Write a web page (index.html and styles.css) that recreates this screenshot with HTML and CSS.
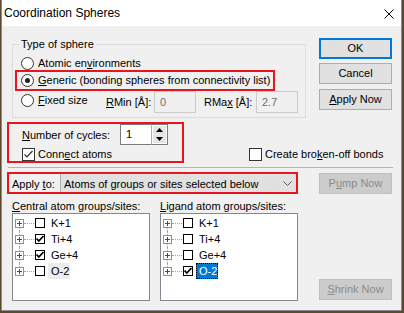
FILE: index.html
```html
<!DOCTYPE html>
<html>
<head>
<meta charset="utf-8">
<title>Coordination Spheres</title>
<link rel="stylesheet" href="styles.css">
</head>
<body>
<div class="window">
	<div class="titlebar">
		<span class="title">Coordination Spheres</span>
		<svg class="close_icon" width="10" height="10" viewBox="0 0 10 10"><path d="M0.5 0.5L9.5 9.5M9.5 0.5L0.5 9.5" stroke="#000" stroke-width="1"/></svg>
	</div>
	<div class="client">
		<div class="top_row">
			<fieldset class="sphere_box">
				<legend>Type of sphere</legend>
				<div class="opt"><span class="radio"></span>Atomic en<u>v</u>ironments</div>
				<div class="opt mark mark_generic"><span class="radio on"></span><u>G</u>eneric (bonding spheres from connectivity list)</div>
				<div class="fixed_row">
					<div class="opt fixed_opt"><span class="radio"></span><u>F</u>ixed size</div>
					<span class="r_label rmin"><u>R</u>Min [Å]:</span>
					<span class="num_box">0</span>
					<span class="r_label rmax">RMa<u>x</u> [Å]:</span>
					<span class="num_box">2.7</span>
				</div>
			</fieldset>
			<div class="btn_col">
				<button class="btn btn_default">OK</button>
				<button class="btn btn_cancel">Cancel</button>
				<button class="btn btn_apply"><u>A</u>pply Now</button>
			</div>
		</div>

		<div class="cycles_row">
			<div class="mark mark_cycles">
				<div class="cycles_line">
					<span class="cycles_label"><u>N</u>umber of cycles:</span>
					<div class="spin">
						<span class="spin_val">1</span>
						<span class="spin_btns">
							<span class="spin_half"><svg width="7" height="4" viewBox="0 0 7 4"><path d="M0 4L3.5 0L7 4Z" fill="#000"/></svg></span>
							<span class="spin_half"><svg width="7" height="4" viewBox="0 0 7 4"><path d="M0 0L3.5 4L7 0Z" fill="#000"/></svg></span>
						</span>
					</div>
				</div>
				<div class="chk_line"><span class="check"><svg width="11" height="11" viewBox="0 0 11 11"><path d="M1.5 5.5L4 8L9.5 2" fill="none" stroke="#333" stroke-width="1.2"/></svg></span>Conn<u>e</u>ct atoms</div>
			</div>
			<div class="chk_line broken_opt"><span class="check"></span>Create bro<u>k</u>en-off bonds</div>
		</div>

		<div class="separator"></div>

		<div class="apply_row">
			<div class="mark mark_apply">
				<span class="apply_label">Apply <u>t</u>o:</span>
				<div class="combo">
					<span>Atoms of groups or sites selected below</span>
					<svg width="9" height="5" viewBox="0 0 9 5"><path d="M0.5 0.5L4.5 4.5L8.5 0.5" fill="none" stroke="#555" stroke-width="1"/></svg>
				</div>
			</div>
			<button class="btn btn_pump" disabled>P<u>u</u>mp Now</button>
		</div>

		<div class="lists_row">
			<div class="list_col">
				<div class="list_label"><u>C</u>entral atom groups/sites:</div>
				<div class="tree">
					<div class="node first"><span class="stem"><span class="stem_up"></span><span class="plus"></span><span class="stem_down"></span></span><span class="hline"></span><span class="tcb"></span><span class="tlabel">K+1</span></div>
					<div class="node"><span class="stem"><span class="stem_up"></span><span class="plus"></span><span class="stem_down"></span></span><span class="hline"></span><span class="tcb"><svg width="8" height="8" viewBox="0 0 8 8"><path d="M0.5 3.5L2.8 6L7.5 1" fill="none" stroke="#000" stroke-width="1.8"/></svg></span><span class="tlabel">Ti+4</span></div>
					<div class="node"><span class="stem"><span class="stem_up"></span><span class="plus"></span><span class="stem_down"></span></span><span class="hline"></span><span class="tcb"><svg width="8" height="8" viewBox="0 0 8 8"><path d="M0.5 3.5L2.8 6L7.5 1" fill="none" stroke="#000" stroke-width="1.8"/></svg></span><span class="tlabel">Ge+4</span></div>
					<div class="node last"><span class="stem"><span class="stem_up"></span><span class="plus"></span><span class="stem_down"></span></span><span class="hline"></span><span class="tcb"></span><span class="tlabel inactive_sel">O-2</span></div>
				</div>
			</div>
			<div class="list_col ligand_col">
				<div class="list_label"><u>L</u>igand atom groups/sites:</div>
				<div class="tree">
					<div class="node first"><span class="stem"><span class="stem_up"></span><span class="plus"></span><span class="stem_down"></span></span><span class="hline"></span><span class="tcb"></span><span class="tlabel">K+1</span></div>
					<div class="node"><span class="stem"><span class="stem_up"></span><span class="plus"></span><span class="stem_down"></span></span><span class="hline"></span><span class="tcb"></span><span class="tlabel">Ti+4</span></div>
					<div class="node"><span class="stem"><span class="stem_up"></span><span class="plus"></span><span class="stem_down"></span></span><span class="hline"></span><span class="tcb"></span><span class="tlabel">Ge+4</span></div>
					<div class="node last"><span class="stem"><span class="stem_up"></span><span class="plus"></span><span class="stem_down"></span></span><span class="hline"></span><span class="tcb"><svg width="8" height="8" viewBox="0 0 8 8"><path d="M0.5 3.5L2.8 6L7.5 1" fill="none" stroke="#000" stroke-width="1.8"/></svg></span><span class="tlabel selected">O-2</span></div>
				</div>
			</div>
			<button class="btn btn_shrink" disabled><u>S</u>hrink Now</button>
		</div>
	</div>
</div>
</body>
</html>
```

FILE: styles.css
```css
html, body{
	margin:0;
	padding:0;
}
body{
	width:404px;
	height:313px;
	overflow:hidden;
	background:#5a4a30;
	font-family:"Liberation Sans", Arial, sans-serif;
	font-size:11px;
	color:#000;
}
u{
	text-decoration:underline;
}
.window{
	margin-left:1px;
	width:399px;
	height:310px;
	border:1px solid #8c8c8c;
	border-top:0;
	background:#f0f0f0;
	display:flex;
	flex-direction:column;
}
.titlebar{
	height:26px;
	flex:none;
	background:#fff;
	display:flex;
	align-items:center;
	justify-content:space-between;
	padding-left:2px;
}
.title{
	font-size:12px;
	line-height:14px;
}
.close_icon{
	margin-right:7px;
	margin-top:1px;
}
.client{
	flex:1;
	padding:12px 9px 0 10px;
	display:flex;
	flex-direction:column;
}

/* top: sphere type + buttons */
.top_row{
	display:flex;
	justify-content:space-between;
	align-items:flex-start;
}
.sphere_box{
	box-sizing:border-box;
	width:294px;
	min-width:0;
	margin:0;
	border:1px solid #dcdcdc;
	padding:0 0 4px 8px;
}
.sphere_box legend{
	padding:0 2px;
	margin-left:-2px;
	line-height:13px;
}
.opt{
	display:flex;
	align-items:center;
	height:16px;
	line-height:16px;
	white-space:nowrap;
}
.sphere_box > .opt:first-of-type{
	margin-top:4px;
}
.mark_generic{
	width:fit-content;
	margin:-1px 0 -3px -6px;
	padding:2px 5px 3px 6px;
}
.mark{
	outline:2px solid #e8141e;
	outline-offset:-2px;
}
.fixed_row{
	display:flex;
	align-items:flex-start;
	margin-top:3px;
}
.fixed_opt{
	width:85px;
	margin-top:1px;
}
.r_label{
	line-height:16px;
	margin-top:3px;
	white-space:nowrap;
}
.rmin{
	width:48px;
}
.rmax{
	width:52px;
	margin-left:8px;
}
.num_box{
	box-sizing:border-box;
	width:42px;
	height:22px;
	border:1px solid #cccccc;
	background:#f0f0f0;
	color:#6d6d6d;
	padding-left:5px;
	line-height:20px;
}
.radio{
	box-sizing:border-box;
	flex:none;
	width:13px;
	height:13px;
	border:1px solid #333;
	border-radius:50%;
	background:#fff;
	margin-right:4px;
	display:flex;
	align-items:center;
	justify-content:center;
}
.radio.on::after{
	content:'';
	width:5px;
	height:5px;
	border-radius:50%;
	background:#222;
}
.check{
	box-sizing:border-box;
	flex:none;
	width:13px;
	height:13px;
	border:1px solid #333;
	background:#fff;
	margin-right:3px;
	display:flex;
}

/* buttons */
.btn{
	box-sizing:border-box;
	width:73px;
	height:21px;
	margin:0;
	padding:0;
	border:1px solid #adadad;
	background:#e1e1e1;
	font:inherit;
	color:#000;
	line-height:19px;
	text-align:center;
}
.btn_col{
	display:flex;
	flex-direction:column;
}
.btn_default{
	border:2px solid #0078d7;
	line-height:17px;
}
.btn_cancel{
	margin-top:4px;
}
.btn_apply{
	margin-top:5px;
}
.btn:disabled{
	background:#cccccc;
	border-color:#bfbfbf;
	color:#8b8b8b;
}

/* cycles */
.cycles_row{
	display:flex;
	align-items:flex-end;
	margin-top:4px;
}
.mark_cycles{
	box-sizing:border-box;
	width:177px;
	margin-left:-5px;
	padding:2px 0 2px 15px;
}
.cycles_line{
	display:flex;
	align-items:center;
}
.cycles_label{
	width:98px;
	white-space:nowrap;
}
.spin{
	display:flex;
	width:48px;
	height:21px;
}
.spin_val{
	box-sizing:border-box;
	width:31px;
	height:21px;
	border:1px solid #7a7a7a;
	border-right:0;
	background:#fff;
	padding-left:5px;
	line-height:19px;
}
.spin_btns{
	box-sizing:border-box;
	width:17px;
	height:21px;
	border:1px solid #7a7a7a;
	border-left-color:#adadad;
	background:#fff;
	display:flex;
	flex-direction:column;
	justify-content:space-between;
	padding:1px;
}
.spin_half{
	height:9px;
	background:#e5e5e5;
	display:flex;
	align-items:center;
	justify-content:center;
}
.chk_line{
	display:flex;
	align-items:center;
	height:13px;
	line-height:13px;
	margin-top:3px;
	white-space:nowrap;
}
.broken_opt{
	margin-left:65px;
	margin-bottom:2px;
}

.separator{
	height:0;
	border-top:1px solid #b4b4b4;
	margin:4px -1px 0 -4px;
}

/* apply to */
.apply_row{
	display:flex;
	justify-content:space-between;
	align-items:flex-start;
	margin-top:4px;
}
.mark_apply{
	display:flex;
	align-items:center;
	margin-left:-5px;
	padding:1px 1px 0 5px;
}
.apply_label{
	width:48px;
	white-space:nowrap;
}
.combo{
	box-sizing:border-box;
	width:237px;
	height:21px;
	border:1px solid #adadad;
	background:#e1e1e1;
	display:flex;
	align-items:center;
	justify-content:space-between;
	padding:0 4px 0 3px;
	white-space:nowrap;
}
.btn_pump{
	margin-top:1px;
}

/* lists */
.lists_row{
	display:flex;
	align-items:flex-end;
	margin-top:6px;
}
.list_col{
	width:138px;
}
.ligand_col{
	margin-left:10px;
}
.list_label{
	line-height:13px;
	white-space:nowrap;
}
.tree{
	box-sizing:border-box;
	height:88px;
	border:1px solid #828790;
	background:#fff;
	padding:1px 0 0 2px;
}
.node{
	display:flex;
	align-items:center;
	height:16px;
}
.stem{
	width:9px;
	height:16px;
	display:flex;
	flex-direction:column;
	align-items:center;
}
.stem_up{
	height:4px;
	border-left:1px dotted #a0a0a0;
}
.stem_down{
	height:3px;
	border-left:1px dotted #a0a0a0;
}
.node.first .stem_up, .node.last .stem_down{
	border-left-color:transparent;
}
.plus{
	box-sizing:border-box;
	width:9px;
	height:9px;
	border:1px solid #919191;
	background:
		linear-gradient(#2b4a9a, #2b4a9a) center / 5px 1px no-repeat,
		linear-gradient(#2b4a9a, #2b4a9a) center / 1px 5px no-repeat,
		#fff;
}
.hline{
	width:10px;
	height:0;
	border-top:1px dotted #a0a0a0;
	margin-right:1px;
}
.tcb{
	box-sizing:border-box;
	width:10px;
	height:10px;
	border:1px solid #000;
	background:#fff;
	display:flex;
}
.tlabel{
	margin-left:3px;
	padding:0 1px 0 3px;
	height:16px;
	line-height:16px;
	white-space:nowrap;
}
.inactive_sel{
	background:#ececec;
}
.selected{
	background:#0078d7;
	color:#fff;
	outline:1px dotted #000;
	outline-offset:-1px;
}
.btn_shrink{
	margin-left:auto;
	margin-bottom:1px;
}
```
